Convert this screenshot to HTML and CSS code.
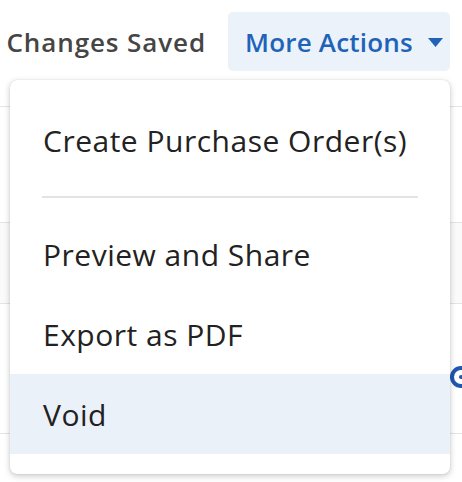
FILE: index.html
```html
<!DOCTYPE html>
<html>
<head>
<meta charset="utf-8">
<link rel="stylesheet" href="styles.css">
</head>
<body>
<div class="page">
  <header class="header">
    <span class="status">Changes Saved</span>
    <button class="actions-btn">
      <span>More Actions</span>
      <svg class="caret" width="15" height="9" viewBox="0 0 15 9"><path d="M0 0 H15 L7.5 9 Z" fill="#1f63b9"/></svg>
    </button>
  </header>
  <div class="rows">
    <div class="row r1"></div>
    <div class="row r2"></div>
    <div class="row r3"><span class="row-icon"></span></div>
    <div class="row r4"></div>
  </div>
  <ul class="menu">
    <li class="item">Create Purchase Order(s)</li>
    <li class="divider"></li>
    <li class="item">Preview and Share</li>
    <li class="item">Export as PDF</li>
    <li class="item active">Void</li>
  </ul>
</div>
</body>
</html>
```
FILE: styles.css
```css
* { box-sizing: border-box; }
html, body { margin: 0; padding: 0; background: #fff; }
body { font-family: "Open Sans", "Liberation Sans", sans-serif; width: 462px; height: 482px; overflow: hidden; }
.page { position: relative; width: 462px; height: 482px; }

.header {
  display: flex;
  align-items: center;
  justify-content: flex-end;
  gap: 22px;
  padding: 12px 12px 0 0;
}
.status {
  flex: none;
  white-space: nowrap;
  font-size: 26px;
  font-weight: 600;
  color: #454545;
  letter-spacing: 0.9px;
}
.actions-btn {
  flex: none;
  display: flex;
  align-items: center;
  gap: 15px;
  height: 59px;
  width: 222px;
  padding: 0 11px 0 17px;
  border: none;
  border-radius: 5px;
  background: #ebf2fa;
  color: #1f63b9;
  font-family: inherit;
  font-size: 26px;
  font-weight: 600;
  letter-spacing: 0.2px;
  white-space: nowrap;
}
.caret { flex: none; margin-top: 2px; }

.rows { margin-top: 35px; }
.row { border-top: 1px solid #e4e4e4; position: relative; }
.r1 { height: 116px; }
.r2 { height: 81px; background: #fafafa; }
.r3 { height: 130px; }
.r4 { height: 40px; }
.row-icon {
  position: absolute;
  left: 450px;
  top: 62px;
  width: 22px;
  height: 22px;
  border: 4px solid #1f56b0;
  border-radius: 50%;
}
.row-icon::after {
  content: "";
  position: absolute;
  left: 5px;
  top: 5px;
  width: 4px;
  height: 4px;
  border-radius: 50%;
  background: #1f56b0;
}

.menu {
  position: absolute;
  top: 80px;
  left: 10px;
  width: 440px;
  margin: 0;
  padding: 20px 0;
  list-style: none;
  background: #fff;
  border-radius: 7px;
  box-shadow: 0 2px 6px rgba(0,0,0,0.22), 0 0 1px rgba(0,0,0,0.2);
}
.item {
  height: 80px;
  display: flex;
  align-items: center;
  padding-left: 33px;
  font-size: 30px;
  letter-spacing: 0.5px;
  color: #222;
}
.item.active { background: #ebf1f8; }
.divider {
  margin: 16px 32px;
  border-top: 2px solid #e3e3e3;
}
```
